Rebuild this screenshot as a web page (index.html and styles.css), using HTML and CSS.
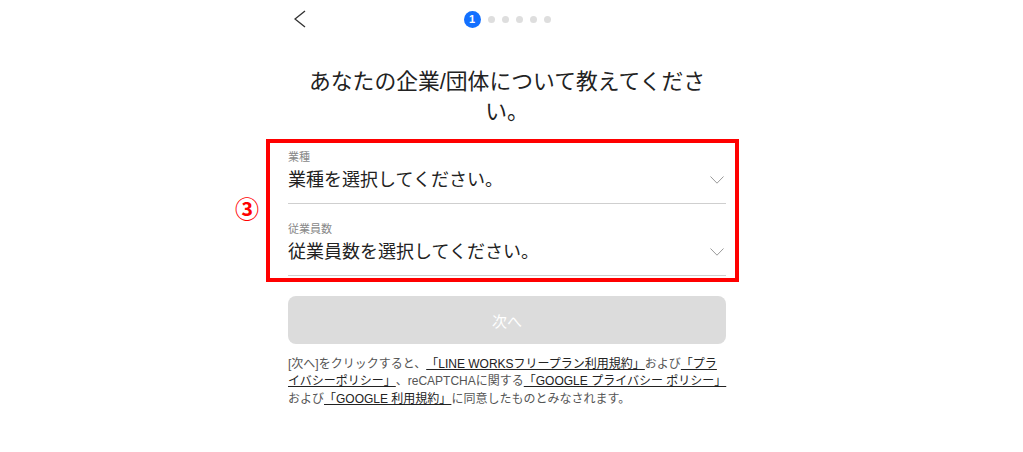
FILE: index.html
```html
<!DOCTYPE html>
<html lang="ja">
<head>
<meta charset="utf-8">
<title>企業/団体情報</title>
<link rel="stylesheet" href="styles.css">
</head>
<body>
<main class="page">
  <header class="topbar">
    <button class="back" aria-label="戻る">
      <svg width="12" height="18" viewBox="0 0 12 18"><polyline points="11,1 1,9 11,17" fill="none" stroke="#333" stroke-width="1.4"/></svg>
    </button>
    <div class="steps">
      <span class="step-current">1</span>
      <span class="step-dot"></span>
      <span class="step-dot"></span>
      <span class="step-dot"></span>
      <span class="step-dot"></span>
      <span class="step-dot"></span>
    </div>
    <span></span>
  </header>

  <h1 class="title">あなたの企業/団体について教えてください。</h1>

  <section class="annot">
    <span class="annot-mark">③</span>
    <div class="field">
      <div class="field-label">業種</div>
      <div class="field-value">
        <span>業種を選択してください。</span>
        <svg class="chev" width="14" height="8" viewBox="0 0 14 8"><polyline points="0.5,0.5 7,7.2 13.5,0.5" fill="none" stroke="#999" stroke-width="1"/></svg>
      </div>
    </div>
    <div class="field field-next">
      <div class="field-label">従業員数</div>
      <div class="field-value">
        <span>従業員数を選択してください。</span>
        <svg class="chev" width="14" height="8" viewBox="0 0 14 8"><polyline points="0.5,0.5 7,7.2 13.5,0.5" fill="none" stroke="#999" stroke-width="1"/></svg>
      </div>
    </div>
  </section>

  <button class="next" disabled>次へ</button>

  <p class="terms">[次へ]をクリックすると、<a href="#">「LINE WORKSフリープラン利用規約」</a>および<a href="#privacy">「プラ</a><a href="#privacy">イバシーポリシー」</a>、reCAPTCHAに関する<a href="#">「GOOGLE プライバシー ポリシー」</a>および<a href="#">「GOOGLE 利用規約」</a>に同意したものとみなされます。</p>
</main>
</body>
</html>
```
FILE: styles.css
```css
html, body {
  margin: 0;
  background: #fff;
}
body {
  padding-right: 9px;
  font-family: "Liberation Sans", "Noto Sans CJK JP", sans-serif;
  color: #222;
  text-spacing-trim: space-all;
}
.page {
  width: 438px;
  margin: 0 auto;
}
.topbar {
  height: 38px;
  display: grid;
  grid-template-columns: 1fr auto 1fr;
  align-items: center;
}
.back {
  justify-self: start;
  margin-left: 6px;
  padding: 0;
  border: 0;
  background: none;
  width: 12px;
  height: 18px;
  display: flex;
}
.steps {
  display: flex;
  align-items: center;
  gap: 7px;
}
.step-current {
  width: 17px;
  height: 17px;
  border-radius: 50%;
  background: #1370ff;
  color: #fff;
  font-size: 11px;
  font-weight: bold;
  display: flex;
  align-items: center;
  justify-content: center;
  line-height: 1;
}
.step-dot {
  width: 7px;
  height: 7px;
  border-radius: 50%;
  background: #dedede;
}
.title {
  margin: 29px 0 0;
  padding: 0 14px;
  font-size: 21.8px;
  line-height: 30px;
  font-weight: normal;
  text-align: center;
  color: #222;
}
.annot {
  position: relative;
  border: 4px solid #ff0000;
  margin: 12px -13px 0 -22px;
  padding: 6px 9px 2px 18px;
}
.annot-mark {
  position: absolute;
  left: -35px;
  top: 55px;
  font-size: 24px;
  line-height: 24px;
  font-weight: bold;
  color: #ff0000;
}
.field {
  border-bottom: 1px solid #cfcfcf;
  padding-bottom: 11px;
}
.field-next {
  margin-top: 17px;
}
.field-label {
  font-size: 11px;
  line-height: 16px;
  color: #888;
}
.field-value {
  margin-top: 3px;
  display: flex;
  justify-content: space-between;
  align-items: center;
  font-size: 18px;
  line-height: 24px;
  color: #222;
}
.chev {
  margin-right: 2px;
}
.next {
  display: block;
  width: 100%;
  height: 48px;
  margin-top: 14px;
  border: 0;
  border-radius: 8px;
  background: #dcdcdc;
  color: #fff;
  font-family: inherit;
  font-size: 15px;
}
.terms {
  margin: 12px -2px 0 0;
  font-size: 12px;
  line-height: 1.45;
  color: #555;
}
.terms a {
  color: #222;
  text-decoration: underline;
}
```
